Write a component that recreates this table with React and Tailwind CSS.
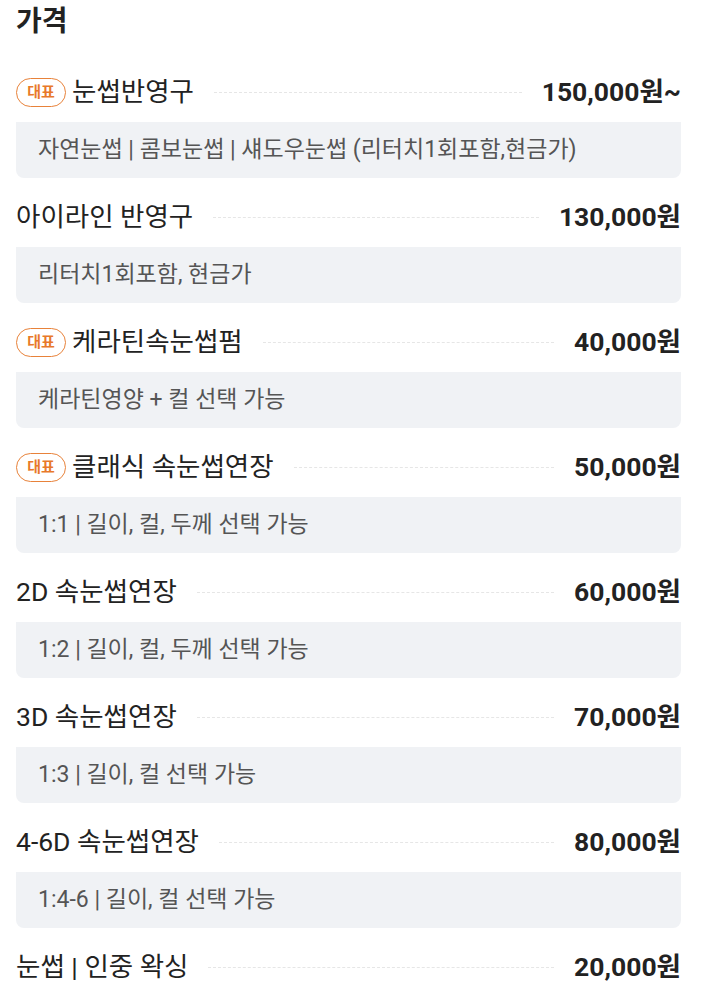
const items = [
  { name: '눈썹반영구', price: '150,000원~', desc: '자연눈썹 | 콤보눈썹 | 섀도우눈썹 (리터치1회포함,현금가)', badge: true },
  { name: '아이라인 반영구', price: '130,000원', desc: '리터치1회포함, 현금가' },
  { name: '케라틴속눈썹펌', price: '40,000원', desc: '케라틴영양 + 컬 선택 가능', badge: true },
  { name: '클래식 속눈썹연장', price: '50,000원', desc: '1:1 | 길이, 컬, 두께 선택 가능', badge: true },
  { name: '2D 속눈썹연장', price: '60,000원', desc: '1:2 | 길이, 컬, 두께 선택 가능' },
  { name: '3D 속눈썹연장', price: '70,000원', desc: '1:3 | 길이, 컬 선택 가능' },
  { name: '4-6D 속눈썹연장', price: '80,000원', desc: '1:4-6 | 길이, 컬 선택 가능' },
  { name: '눈썹 | 인중 왁싱', price: '20,000원' },
];

const PriceItem = ({ item }) => (
  <div className="mb-[9px]">
    <div className="flex h-[60px] items-center">
      {item.badge && (
        <span className="mr-[6px] flex h-[29px] w-[50px] items-center justify-center rounded-full border-[1.5px] border-[#e8823a] text-[15px] font-bold text-[#e8792a]">
          대표
        </span>
      )}
      <span className="text-[26.5px] text-[#222]">{item.name}</span>
      <span className="mx-[20px] flex-1 border-t border-dashed border-[#e6e6e6]"></span>
      <span className="text-[26.5px] font-bold text-[#222]">{item.price}</span>
    </div>
    {item.desc && (
      <div className="flex h-[56px] items-center rounded-b-lg bg-[#f0f2f5] px-[22px] text-[23px] text-[#555]">
        {item.desc}
      </div>
    )}
  </div>
);

const App = () => {
  return (
    <div className="w-[704px] bg-white px-[16px] pr-[23px] font-['Roboto','Noto_Sans_CJK_KR',sans-serif]">
      <h2 className="flex h-[44px] items-center text-[28px] font-bold text-[#222]">가격</h2>
      <div className="mt-[18px]">
        {items.map((item) => (
          <PriceItem key={item.name} item={item} />
        ))}
      </div>
    </div>
  );
};

export default App;
